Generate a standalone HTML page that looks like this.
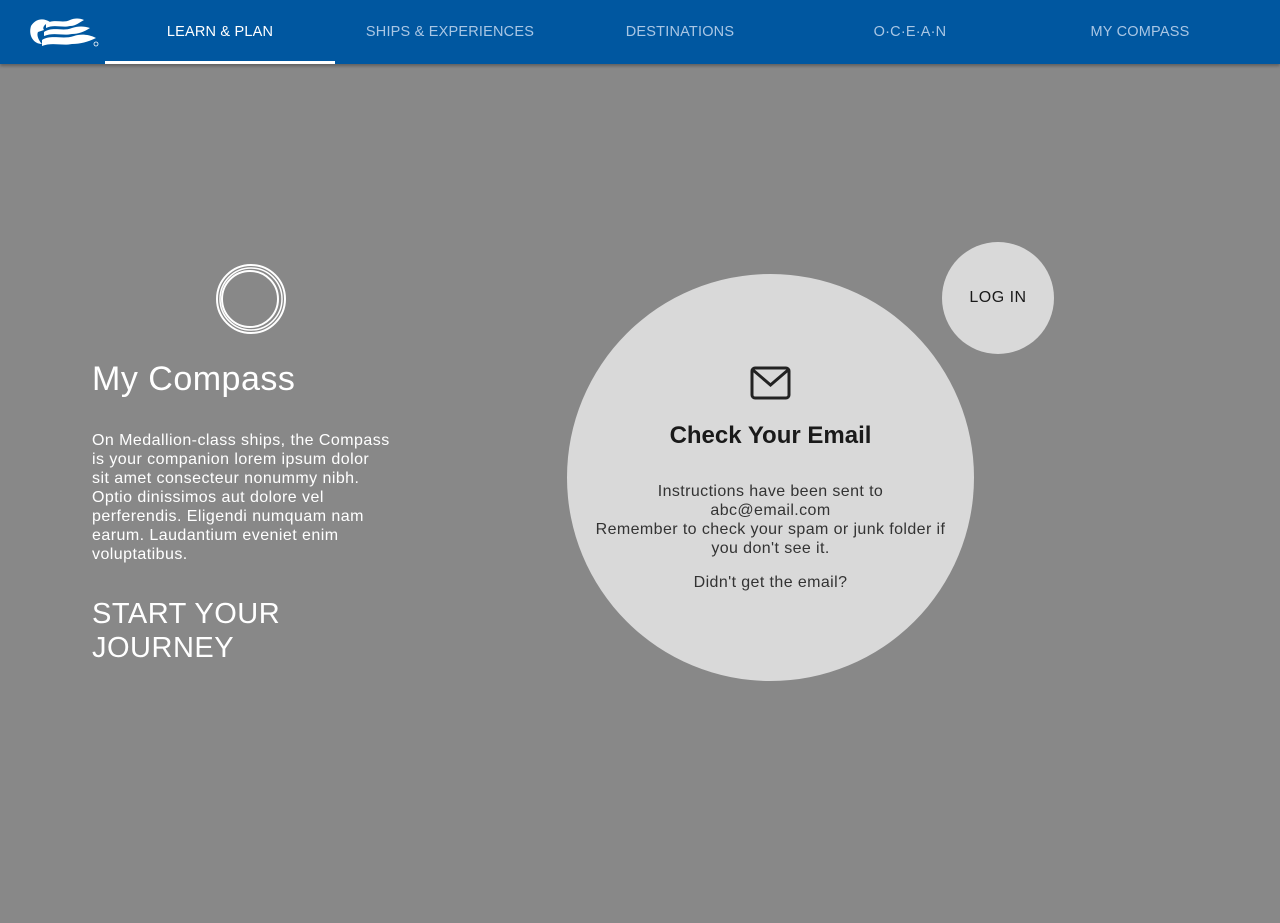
<!DOCTYPE html>
<html><head><style>
body{margin:0;width:1280px;height:923px;background:#888;font-family:"Liberation Sans",sans-serif;overflow:hidden;position:relative}
.nav{position:absolute;top:0;left:0;width:1280px;height:64px;background:#0057a0;box-shadow:0 2px 3px rgba(0,0,0,.3)}
.nav a{position:absolute;top:0;height:64px;line-height:64px;width:230px;text-align:center;color:#a9c6e4;font-size:14.5px;letter-spacing:0.2px;text-decoration:none}
.nav a.act{color:#fff;border-bottom:3px solid #fff;height:61px}
.t{position:absolute;color:#fff}
</style></head><body>
<div class="nav">
<svg style="position:absolute;left:28px;top:16px" width="72" height="32" viewBox="0 0 72 32">
<path d="M3 10 C8 2 16 2 22 6 C16 8 14 12 16 14 L10 16 C8 20 12 26 14 28 C6 28 0 20 3 10Z" fill="#fff"/>
<path d="M18 8 C26 2 34 8 42 4 C46 2 52 2 56 4 C52 6 48 10 42 10 C34 12 26 8 18 12Z" fill="#fff"/>
<path d="M16 16 C26 10 34 16 44 12 C50 10 56 10 62 12 C56 16 50 18 44 18 C34 20 26 16 16 20Z" fill="#fff"/>
<path d="M14 24 C24 18 34 24 46 20 C52 18 60 18 68 22 C60 26 52 28 44 28 C34 30 24 26 14 30Z" fill="#fff"/>
<circle cx="68" cy="28" r="2" fill="none" stroke="#fff" stroke-width=".8"/>
</svg>
<a class="act" style="left:105px">LEARN &amp; PLAN</a>
<a style="left:335px">SHIPS &amp; EXPERIENCES</a>
<a style="left:565px">DESTINATIONS</a>
<a style="left:795px">O·C·E·A·N</a>
<a style="left:1025px">MY COMPASS</a>
</div>
<svg style="position:absolute;left:214px;top:262px" width="74" height="74" viewBox="0 0 74 74" fill="none" stroke="#fff">
<circle cx="37" cy="37" r="34" stroke-width="2"/><circle cx="37" cy="37" r="31" stroke-width="1.5"/><circle cx="36" cy="37" r="28" stroke-width="2"/>
</svg>
<div class="t" style="left:92px;top:360px;font-size:34px;letter-spacing:0.5px">My Compass</div>
<div class="t" style="left:92px;top:431px;width:330px;font-size:16px;line-height:19px;letter-spacing:0.45px;white-space:nowrap">On Medallion-class ships, the Compass<br>is your companion lorem ipsum dolor<br>sit amet consecteur nonummy nibh.<br>Optio dinissimos aut dolore vel<br>perferendis. Eligendi numquam nam<br>earum. Laudantium eveniet enim<br>voluptatibus.</div>
<div class="t" style="left:92px;top:597px;font-size:29px;line-height:34px;letter-spacing:0.5px">START YOUR<br>JOURNEY</div>
<div style="position:absolute;left:567px;top:274px;width:407px;height:407px;border-radius:50%;background:#d9d9d9;text-align:center;color:#333">
<svg style="position:absolute;left:183px;top:92px" width="41" height="34" viewBox="0 0 41 34" fill="none" stroke="#222" stroke-width="3"><rect x="2" y="2" width="37" height="30" rx="3"/><path d="M3 4 L20.5 19 L38 4"/></svg>
<div style="position:absolute;top:148px;width:100%;font-size:24px;font-weight:bold;color:#1a1a1a">Check Your Email</div>
<div style="position:absolute;top:208px;left:14px;right:14px;font-size:16px;line-height:19px;letter-spacing:0.4px">Instructions have been sent to<br>abc@email.com<br>Remember to check your spam or junk folder if you don't see it.</div>
<div style="position:absolute;top:300px;width:100%;font-size:16px;letter-spacing:0.4px">Didn't get the email?</div>
</div>
<div style="position:absolute;left:942px;top:242px;width:112px;height:112px;border-radius:50%;background:#d9d9d9;line-height:112px;text-align:center;font-size:16px;letter-spacing:0.5px;color:#1a1a1a">LOG IN</div>
</body></html>
